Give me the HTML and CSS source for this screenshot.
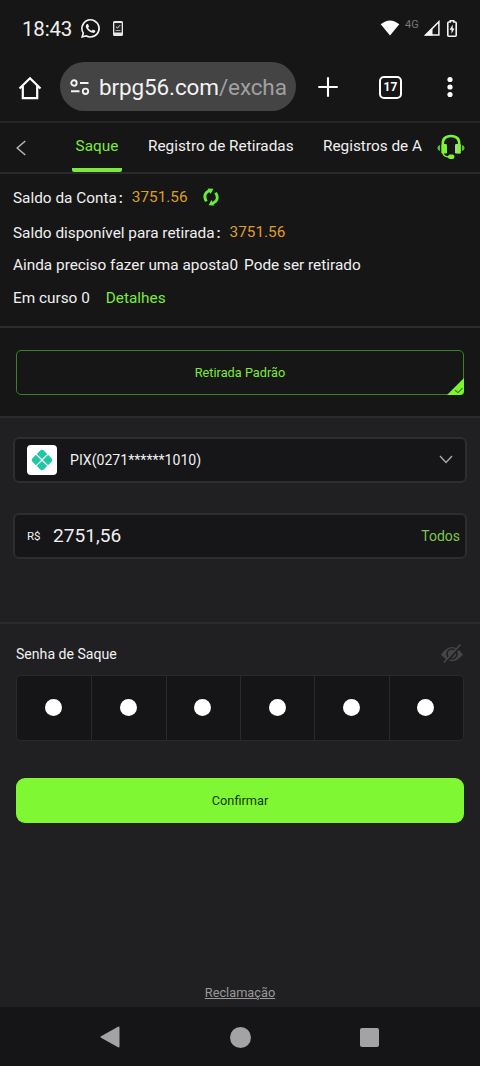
FILE: index.html
```html
<!DOCTYPE html>
<html lang="pt-BR">
<head>
<meta charset="utf-8">
<meta name="viewport" content="width=device-width, initial-scale=1">
<title>Saque</title>
<link rel="stylesheet" href="styles.css">
</head>
<body>
<div class="phone">
  <header class="status">
    <span class="clock">18:43</span>
    <svg class="whatsapp" width="19" height="19" viewBox="0 0 24 24" fill="#f4f4f4"><path d="M17.5 14.4c-.3-.15-1.76-.87-2.03-.97-.27-.1-.47-.15-.67.15-.2.3-.77.97-.94 1.16-.17.2-.35.22-.64.08-.3-.15-1.26-.46-2.4-1.48-.88-.79-1.48-1.76-1.65-2.06-.17-.3-.02-.46.13-.6.13-.14.3-.35.45-.53.15-.17.2-.3.3-.5.1-.2.05-.37-.03-.52-.07-.15-.67-1.6-.91-2.2-.25-.58-.5-.5-.67-.51h-.57c-.2 0-.52.07-.8.37-.27.3-1.04 1.02-1.04 2.48s1.07 2.88 1.22 3.07c.15.2 2.1 3.2 5.08 4.49 2.5 1 3 .8 3.53.75.54-.05 1.76-.72 2-1.41.25-.7.25-1.3.18-1.42-.08-.12-.27-.2-.57-.34M12 0a11.8 11.8 0 0 0-10.2 17.8L0 24l6.300-1.650A11.900 11.900 0 1 0 12 0m0 21.700a9.800 9.800 0 0 1-5.300-1.400l-3.700 1 1-3.600A9.800 9.800 0 1 1 12 21.700"/></svg>
    <svg class="device" width="10" height="15" viewBox="0 0 10 15"><rect x="0" y="0" width="10" height="15" rx="1.500" fill="#e8e8e8"/><rect x="1.300" y="2" width="7.400" height="9.500" fill="#222"/><path d="M3 5.700l1.500 1.400 2.700-3" fill="none" stroke="#ddd"/><path d="M2.600 9.500h4.800" stroke="#aaa"/></svg>
    <div class="signals">
      <svg width="20" height="16" viewBox="0 0 20 16"><path d="M.7 4.300Q10-3.300 19.300 4.300L10 15.600z" fill="#fff"/></svg>
      <span class="net">4G</span>
      <svg width="16" height="16" viewBox="0 0 16 16"><path d="M1.700 14.900H14.900V1.700z" fill="none" stroke="#f4f4f4" stroke-width="1.500"/><path d="M1 15.500L8.500 8v7.500z" fill="#f4f4f4"/></svg>
      <svg class="battery" width="10" height="17" viewBox="0 0 10 17"><path d="M3.300 2V.8h3.400V2H8.200q1 0 1 1V15.200q0 1-1 1H1.800q-1 0-1-1V3q0-1 1-1z" fill="none" stroke="#f4f4f4" stroke-width="1.600"/><path d="M5.700 4.500L2.600 9.700h1.900v4l3-5.300H5.700z" fill="#f4f4f4"/></svg>
    </div>
  </header>

  <div class="toolbar">
    <svg class="home" width="24" height="24" viewBox="0 0 24 24"><path d="M1.500 12.500L12 2.200l10.500 10.300M4.800 10v12.200h14.400V10" fill="none" stroke="#fff" stroke-width="2.200"/></svg>
    <div class="address">
      <svg width="20" height="16" viewBox="0 0 20 16" fill="none" stroke="#f2f2f2" stroke-width="1.900"><circle cx="4" cy="4" r="2.700"/><path d="M10 4h8.500M1 12.300h8.500"/><circle cx="15.500" cy="12.300" r="2.700"/></svg>
      <span class="url">brpg56.com<span class="path">/excha</span></span>
    </div>
    <svg class="plus" width="20" height="20" viewBox="0 0 20 20"><path d="M10 .3v19.400M.3 10h19.400" stroke="#fff" stroke-width="2.100"/></svg>
    <span class="tabcount">17</span>
    <svg class="dots" width="6" height="22" viewBox="0 0 6 22" fill="#fff"><circle cx="3" cy="3.500" r="2.600"/><circle cx="3" cy="11" r="2.600"/><circle cx="3" cy="18.500" r="2.600"/></svg>
  </div>

  <nav class="tabs">
    <svg class="back" width="10" height="16" viewBox="0 0 10 16"><path d="M9.300 1L1.200 8l8.100 7" fill="none" stroke="#b5b5b5" stroke-width="1.500"/></svg>
    <span class="tab active">Saque</span>
    <span class="tab">Registro de Retiradas</span>
    <span class="tab last">Registros de A</span>
    <svg class="support" width="28" height="26" viewBox="0 0 28 26"><path d="M6 11C5 5 8.500 2 14 2s9 3 8 9" fill="none" stroke="#7cf531" stroke-width="2.600"/><rect x="4.300" y="10" width="5.700" height="9.500" rx="1.200" fill="#7cf531"/><rect x="18" y="10" width="5.700" height="9.500" rx="1.200" fill="#a4db86"/><rect x="20.800" y="10" width="2.900" height="9.500" rx="1" fill="#7cf531"/><path d="M3 11v6Q.4 16.500.4 14T3 11zM25 11v6q2.600-.5 2.600-3T25 11z" fill="#5fbd2b"/><path d="M6 19Q6.500 22.700 12 23" fill="none" stroke="#7cf531" stroke-width="1.500"/><rect x="11" y="20.500" width="6.500" height="4.500" rx="2.200" fill="#7cf531"/></svg>
  </nav>

  <section class="balances">
    <div class="line l1"><span>Saldo da Conta</span><b class="colon">:</b><span class="gold">3751.56</span>
      <svg class="refresh" width="18" height="18" viewBox="0 0 18 18"><path d="M9.500 2.400C4 2.800 1.600 7 3.400 11.500l1 1.900M8.500 15.600c5.500-.4 7.900-4.600 6.100-9.100l-1-1.900" fill="none" stroke="#65ef39" stroke-width="2.800"/><path d="M5.600.4L11.400.7 8.600 6zM12.400 17.600L6.600 17.300 9.400 12z" fill="#65ef39"/></svg>
    </div>
    <div class="line l2"><span>Saldo disponível para retirada</span><b class="colon">:</b><span class="gold">3751.56</span></div>
    <div class="line l3"><span>Ainda preciso fazer uma aposta0</span><span class="after">Pode ser retirado</span></div>
    <div class="line l4"><span>Em curso 0</span><span class="details">Detalhes</span></div>
  </section>

  <section class="method">
    <div class="option">Retirada Padrão
      <svg class="corner" width="18" height="18" viewBox="0 0 18 18"><path d="M18 1v13q0 4-4 4H1z" fill="#7cf531"/><path d="M9 13.200l3 2.400 4.500-4.400" fill="none" stroke="#347619" stroke-width="1.100"/></svg>
    </div>
  </section>

  <section class="account">
    <div class="field select">
      <span class="pix"><svg width="22" height="22" viewBox="0 0 22 22" fill="#1fc8a5"><path d="M11 .8q1 0 1.700.7l3.500 3.400-5.200 5.200-5.200-5.200 3.500-3.400Q10 .8 11 .8zM11 21.200q1 0 1.700-.7l3.500-3.400-5.200-5.200-5.200 5.200 3.500 3.400q.7.700 1.700.7zM.8 11q0-1 .7-1.700l3.400-3.500 5.200 5.200-5.200 5.200-3.400-3.500Q.8 12 .8 11zM21.200 11q0-1-.7-1.700l-3.400-3.500-5.200 5.200 5.200 5.200 3.400-3.500q.7-.7.7-1.700z"/></svg></span>
      <span class="key">PIX(0271******1010)</span>
      <svg class="chevron" width="14" height="9" viewBox="0 0 14 9"><path d="M1 1l6 6.500L13 1" fill="none" stroke="#aaa" stroke-width="1.400"/></svg>
    </div>
    <div class="field amount">
      <span class="currency">R$</span><span class="value">2751,56</span><span class="all">Todos</span>
    </div>
  </section>

  <section class="password">
    <div class="label"><span>Senha de Saque</span>
      <svg width="24" height="20" viewBox="0 0 24 20"><path d="M1 10.500Q12-4.500 23 10.500 12 24 1 10.500z" fill="#454447"/><circle cx="12" cy="10" r="5" fill="none" stroke="#201f21" stroke-width="1.600"/><path d="M4.500 19.500L21 1" stroke="#201f21" stroke-width="3.200"/><path d="M3.800 18.500L20.500.5" stroke="#49484b" stroke-width="1.500"/></svg>
    </div>
    <div class="pins"><i></i><i></i><i></i><i></i><i></i><i></i></div>
    <button class="confirm">Confirmar</button>
  </section>
  <div class="complaint"><a>Reclamação</a></div>

  <footer class="sysnav">
    <svg width="20" height="22" viewBox="0 0 20 22"><path d="M18.500 1.500v19L1.500 11z" fill="#a3a2a5" stroke="#a3a2a5" stroke-width="2" stroke-linejoin="round"/></svg>
    <span class="circle"></span>
    <span class="square"></span>
  </footer>
</div>
</body>
</html>
```
FILE: styles.css
```css
* { box-sizing: border-box; }
body { margin: 0; background: #161616; font-family: Roboto, sans-serif; color: #f0f0f0; }
svg { display: block; flex: none; }
span { white-space: nowrap; }
.phone { width: 480px; height: 1066px; display: flex; flex-direction: column; overflow: hidden; background: #201f21; }
.phone > * { flex: none; }

.status { height: 56px; background: #161616; display: flex; align-items: center; padding-left: 22px; padding-right: 23px; }
.clock { width: 50px; font-size: 20.5px; letter-spacing: -.2px; margin-top: 1px; }
.whatsapp { margin-left: 9px; }
.device { margin-left: 13px; }
.signals { margin-left: auto; display: flex; align-items: center; }
.net { width: 16px; margin: -7px 3px 0 5px; font-size: 11px; color: #777; }
.battery { margin-left: 7px; }

.toolbar { height: 65px; background: #161616; display: flex; align-items: center; padding: 0 27px 0 18px; }
.toolbar .home { margin-top: -1px; }
.address { width: 236px; height: 49px; margin: -4px 0 0 18px; padding-left: 10px; border-radius: 25px; background: #444; display: flex; align-items: center; }
.url { margin-left: 9px; font-size: 22.5px; letter-spacing: -.12px; color: #f2f2f2; }
.path { color: #a0a0a0; }
.plus { margin: -3px 0 0 22px; }
.tabcount { width: 23px; height: 23px; margin: -3px 0 0 41px; border: 2px solid #fff; border-radius: 5px; font: bold 12px/19px Roboto, sans-serif; text-align: center; color: #fff; }
.dots { margin: -3px 0 0 auto; }

.tabs { height: 53px; background: #161616; border-top: 2px solid #262626; border-bottom: 2px solid #2a2a2a; display: flex; align-items: flex-start; padding-left: 16px; }
.back { margin-top: 17px; }
.tab { height: 49px; font-size: 15.35px; line-height: 46px; margin-left: 29px; }
.tab.active { width: 50px; margin-left: 46px; border-bottom: 4px solid #7de93c; border-radius: 2px; text-align: center; color: #7de93c; }
.tab:not(.active):not(.last) { width: 146px; margin-left: 26px; }
.tab.last { width: 100px; }
.support { margin: 11px 0 0 14px; }

.balances { height: 154px; background: #161616; border-bottom: 2px solid #2d2d2d; padding: 7px 13px 0; font-size: 15.35px; }
.line { display: flex; align-items: center; height: 34px; }
.l1 { height: 34px; }
.l2 { height: 36px; }
.l3 { height: 28px; }
.l4 { height: 38px; }
.colon { width: 15px; padding-left: 2px; font-weight: 500; }
.gold { width: 56px; margin-top: -2px; color: #dc9e2a; }
.refresh { margin-left: 14px; margin-top: -2px; }
.after { margin-left: 6px; }
.details { margin-left: 16px; color: #7de93c; }

.method { height: 90px; background: #161616; border-bottom: 2px solid #2b2b2c; padding: 22px 16px 0; }
.option { position: relative; height: 45px; border: 1px solid #3d7e26; border-radius: 5px; font-size: 12.750px; line-height: 43px; text-align: center; color: #7de93c; }
.corner { position: absolute; right: -1px; bottom: -1px; }

.account { height: 206px; padding: 19px 13px 0; border-bottom: 2px solid #2b2b2c; }
.field { height: 46px; background: #161517; border: 2px solid #2d2c2e; border-radius: 6px; display: flex; align-items: center; }
.select { padding: 0 12px; }
.pix { width: 30px; height: 30px; border-radius: 4px; background: #fff; display: grid; place-items: center; }
.key { margin-left: 13px; margin-top: -1px; font-size: 14.1px; }
.chevron { margin-left: auto; margin-top: -1px; }
.amount { margin-top: 30px; padding: 0 5px 0 12px; }
.currency { width: 26px; margin-top: -1px; font-size: 11.500px; }
.value { font-size: 19.1px; margin-top: -1px; }
.all { margin-left: auto; font-size: 14px; color: #7bc94e; }

.password { height: 357px; padding: 18px 16px 0; }
.label { height: 33px; display: flex; justify-content: space-between; align-items: flex-start; font-size: 14.1px; line-height: 24px; }
.label svg { margin-top: 2px; }
.pins { height: 66px; display: grid; grid-template-columns: repeat(6, 1fr); background: #151416; border: 1px solid #29282a; border-radius: 5px; }
.pins i { display: grid; place-items: center; border-left: 1px solid #2a292b; padding: 0 1px 2px 0; }
.pins i:first-child { border-left: 0; }
.pins i::before { content: ""; width: 17px; height: 17px; border-radius: 50%; background: #fff; }
.confirm { display: block; width: 448px; height: 45px; margin-top: 37px; padding: 0 0 1px; border: 0; border-radius: 9px; background: #7ff732; color: #173808; font: 12.750px Roboto, sans-serif; }
.complaint { height: 26px; text-align: center; font-size: 12.750px; line-height: 24px; color: #99989b; }
.complaint a { text-decoration: underline; }

.sysnav { height: 60px; background: #151517; display: flex; align-items: center; padding-left: 100px; }
.circle { width: 21px; height: 21px; margin-left: 110px; border-radius: 50%; background: #a3a2a5; }
.square { width: 19px; height: 19px; margin-left: 109px; border-radius: 2px; background: #a3a2a5; }
```
